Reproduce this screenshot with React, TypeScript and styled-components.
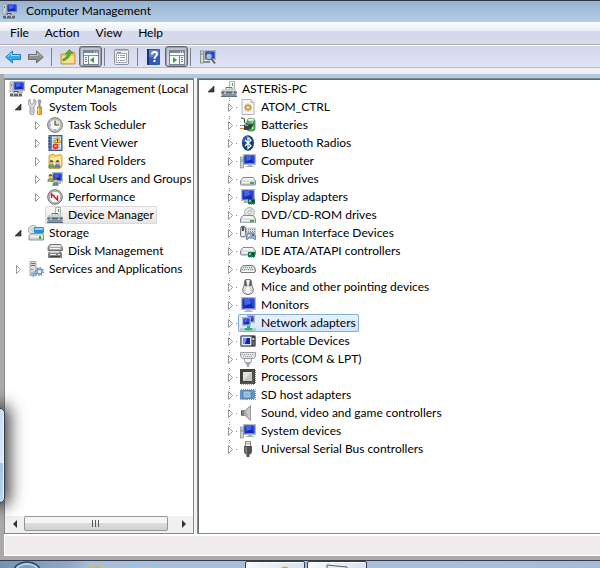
import React, { useState } from "react";
import styled, { createGlobalStyle, css } from "styled-components";

const GlobalStyle = createGlobalStyle`
  * { box-sizing: border-box; }
  body {
    margin: 0;
    background: #a9a9a9;
    color: #000;
    font-family: Lato, "Open Sans", sans-serif;
    font-size: 12px;
    line-height: 18px;
  }
  button { font: inherit; color: inherit; border: 0; padding: 0; background: none; }
  ul { list-style: none; margin: 0; padding: 0; }
`;

/* ---------- icons ---------- */

const Svg = styled.svg`
  display: block;
  flex: none;
  width: 16px;
  height: 16px;
`;

const Icon = ({ children }: { children: React.ReactNode }) => (
  <Svg viewBox="0 0 16 16" aria-hidden="true">
    {children}
  </Svg>
);

const Screen = ({ x, y, w, h }: { x: number; y: number; w: number; h: number }) => (
  <g>
    <rect x={x + 0.3} y={y + 0.3} width={w - 0.6} height={h - 0.6} fill="#dadde0" stroke="#9a9fa6" strokeWidth=".6" />
    <g transform={`translate(${x + 1.5} ${y + 1.5}) scale(${(w - 3) / 10} ${(h - 3) / 10})`}>
      <path d="M0 0h10v10H0z" fill="#1226c4" />
      <path d="M0 0h5L2 10H0z" fill="#1c35b4" />
      <path d="M1 0h5l1 5-5 2z" fill="#4468dc" />
      <path d="M6 0h4v10H9z" fill="#2446e4" />
    </g>
  </g>
);

const Green = ({ x, y }: { x: number; y: number }) => (
  <g shapeRendering="crispEdges">
    <rect x={x} y={y} width="7" height="5" fill="#11744a" />
    <rect x={x + 1} y={y + 1} width="2" height="2" fill="#6fd06f" />
    <rect x={x + 4} y={y + 1} width="2" height="2" fill="#0a3a2a" />
    <path d={`M${x + 1} ${y + 5}h1v1h-1zM${x + 3} ${y + 5}h1v1h-1zM${x + 5} ${y + 5}h1v1h-1z`} fill="#c7a73c" />
  </g>
);

const DriveBody = ({ y }: { y: number }) => (
  <g>
    <path d={`M3 ${y + 0.5}h10l2.500 3.500v3q0 1-1 1h-13q-1 0-1-1v-3z`} fill="#d4d6d8" stroke="#85898c" />
    <path d={`M3.500 ${y + 1}h9l2 2.500h-13z`} fill="#f3f4f4" />
    <rect x="2" y={y + 5} width="12" height="1" fill="#f6f6f6" />
    <rect x="10" y={y + 5} width="4" height="2" fill="#36b336" />
  </g>
);

const ComputerMgmt = () => (
  <Icon>
    <Screen x={4} y={0} w={12} h={10} />
    <rect x="8" y="10" width="6" height="2" fill="#b6b9bd" />
    <rect x="1" y="1" width="3" height="10" fill="#d5d7d4" stroke="#8c9096" strokeWidth=".6" />
    <rect x="2" y="3" width="1" height="2" fill="#46a84a" />
    <path d="M1 12h12v3.500H1z" fill="#59636d" />
    <path d="M5 12v-1.500h4V12" fill="none" stroke="#49525b" />
    <path d="M1 12h12v1H1z" fill="#a6b0b9" />
    <path d="M4.500 12.500v2M9.500 12.500v2" stroke="#e6e9eb" />
  </Icon>
);

const Tools = () => (
  <Icon>
    <path d="M2 0v4l2 1.500L6 4V0q2 1 2 3.500T6 7v7q0 1.800-2 1.800T2 14V7Q0 5.800 0 3.500T2 0z" fill="#e3e6e8" stroke="#777e86" strokeWidth=".8" />
    <path d="M4 8v6" stroke="#a4a9af" />
    <path d="M10.500 1h2l.5 2-.8 1V8h-1.400V4L10 3z" fill="#9da3a8" stroke="#666c72" strokeWidth=".5" />
    <path d="M9.500 8h4v2l-.8 1 .8 1v3q0 .8-2 .8t-2-.8v-3l.8-1-.8-1z" fill="#f0a516" stroke="#a86a08" strokeWidth=".7" />
    <path d="M10.700 8.500v6.500" stroke="#ffe089" />
  </Icon>
);

const Clock = () => (
  <Icon>
    <circle cx="8" cy="8" r="7.400" fill="#c6c8cb" stroke="#686d73" strokeWidth=".9" />
    <circle cx="8" cy="8" r="5.600" fill="#f4f6f8" stroke="#8b9197" strokeWidth=".6" />
    <path d="M8 8V2.600A5.400 5.400 0 0 1 13.400 8z" fill="#f6dfa7" />
    <path d="M8 3.500V8h4" fill="none" stroke="#3f4348" strokeWidth="1.100" />
    <path d="M3 8h1M8 12v1" stroke="#707780" />
  </Icon>
);

const EventLog = () => (
  <Icon>
    <rect x="2" y="0.500" width="13" height="15" fill="#5f85bd" stroke="#3d5c8e" />
    <rect x="5" y="1.500" width="9" height="13" fill="#d9e5f4" />
    <path d="M6 3.500h7M6 5.500h7M6 7.500h7M6 9.500h7M6 12.500h7" stroke="#93aed3" />
    <path d="M1 3h3M1 6h3M1 9h3M1 12h3" stroke="#30486e" />
    <path d="M10.500 2l3.500 5.500H7z" fill="#ffca1c" stroke="#b5860a" strokeWidth=".6" />
    <path d="M10.500 4v2M10.500 6.500v.8" stroke="#3a2a00" />
    <circle cx="8.500" cy="11.300" r="2.900" fill="#d8301c" />
    <path d="M7.400 10.200l2.200 2.200M9.600 10.200l-2.200 2.200" stroke="#fff" strokeWidth=".9" />
  </Icon>
);

const Person = ({ x, y, c }: { x: number; y: number; c: string }) => (
  <g>
    <path d={`M${x - 2.8} ${y + 5}q0-3.500 2.800-3.500t2.800 3.500z`} fill={c} stroke="#3d5b50" strokeWidth=".4" />
    <circle cx={x} cy={y} r="2" fill="#e8bd83" />
    <path d={`M${x - 2} ${y}q0-2.500 2-2.500t2 2.500q-2-1.500-4 0z`} fill="#6b4a1c" />
  </g>
);

const SharedFolder = () => (
  <Icon>
    <path d="M2 2.500L7 1l1 1.500 6-1 1 1v11l-2 2H2z" fill="#f7d568" stroke="#c1922c" strokeWidth=".8" />
    <path d="M3 5l11-1.500V13L3 15z" fill="#fceaa2" />
    <Person x={4.5} y={9.5} c="#5aa66c" />
    <Person x={10.5} y={9.5} c="#4f80c2" />
  </Icon>
);

const Users = () => (
  <Icon>
    <Screen x={5} y={1} w={11} h={10} />
    <rect x="9" y="11" width="5" height="2" fill="#b3b7bb" />
    <Person x={3.5} y={5.5} c="#86b552" />
    <Person x={8.5} y={9.5} c="#4d91be" />
  </Icon>
);

const Perf = () => (
  <Icon>
    <circle cx="8" cy="8" r="7.300" fill="#c2c4c6" stroke="#6b6e72" />
    <circle cx="8" cy="8" r="5.700" fill="#fff" stroke="#888" strokeWidth=".6" />
    <path d="M4.500 9V5l6 6V6.500" fill="none" stroke="#cf1616" strokeWidth="1.400" />
    <path d="M4.500 5L8 6.500" stroke="#e25a5a" />
  </Icon>
);

const DeviceMgr = () => (
  <Icon>
    <path d="M8.500 0.500h5v8h-5z" fill="#f2f4f3" stroke="#9ba2a2" strokeWidth=".8" />
    <rect x="11" y="2" width="1" height="3" fill="#3fae54" />
    <path d="M5 8V6.500h6V8" fill="none" stroke="#667581" />
    <path d="M2.500 8h11l2 2v5.500H.5V10z" fill="#8495a4" />
    <path d="M2.500 8h11l1.500 2H1z" fill="#c9d2d9" />
    <path d="M0 11.500h16" stroke="#56697a" />
    <path d="M4 10.500v2.500M12 10.500v2.500" stroke="#eef2f4" />
    <path d="M0 15.500h16" stroke="#5c6e7d" />
  </Icon>
);

const Storage = () => (
  <Icon>
    <circle cx="5" cy="5" r="4.600" fill="#dfe3e8" stroke="#92979d" strokeWidth=".8" />
    <circle cx="5" cy="5" r="1.300" fill="#fff" stroke="#9aa0a8" strokeWidth=".6" />
    <rect x="6" y="2" width="10" height="6" rx="1" fill="#2792d2" />
    <path d="M7 3h8v2H7z" fill="#8ed3f3" />
    <path d="M3 8.500h12l.5 2V15H1v-4.500z" fill="#d5d6d7" stroke="#797c80" strokeWidth=".8" />
    <path d="M2 11.500h13" stroke="#fff" />
    <rect x="11" y="11" width="2" height="3" fill="#39ad35" />
  </Icon>
);

const DiskMgmt = () => (
  <Icon>
    <path d="M3 1.500h10.500l2 3v3H1v-3z" fill="#a3a6a9" stroke="#56595c" strokeWidth=".8" />
    <path d="M3.500 2h10l1 2h-12z" fill="#e4e5e6" />
    <path d="M2 8.500h12l1 2V15H1v-4.500z" fill="#7d8083" />
    <path d="M3 5.500h10M3 11.500h6" stroke="#f5f5f5" />
    <rect x="3" y="8" width="9" height="2" fill="#d5d6d7" />
    <path d="M3 13.500h10" stroke="#3d4043" />
    <rect x="11" y="11" width="2" height="1" fill="#e2e3e3" />
  </Icon>
);

const Gear = ({ cx, cy, r, color }: { cx: number; cy: number; r: number; color: string }) => (
  <g>
    <circle cx={cx} cy={cy} r={r} fill="none" stroke={color} strokeWidth="2" strokeDasharray="1.500 1.200" />
    <circle cx={cx} cy={cy} r={r - 1} fill="#e6edf5" stroke={color} strokeWidth="1.300" />
  </g>
);

const Services = () => (
  <Icon>
    <path d="M2 .5h6v14H2z" fill="#d9dde0" stroke="#8f969c" strokeWidth=".8" />
    <path d="M3 2.500h4M3 4.500h4" stroke="#66707a" />
    <rect x="3" y="8" width="2" height="1" fill="#48ad4c" />
    <Gear cx={6} cy={13} r={2} color="#8fa9c4" />
    <Gear cx={11.5} cy={10.5} r={3.5} color="#6d94bf" />
  </Icon>
);

const FileGear = () => (
  <Icon>
    <path d="M2 .5h9l3 3v12H2z" fill="#fafafa" stroke="#9b9ea1" strokeWidth=".8" />
    <path d="M11 .5v3h3" fill="#dfe1e3" stroke="#9b9ea1" strokeWidth=".7" />
    <path d="M8 4.500v8M4 8.500h8M5.200 5.700l5.600 5.600M10.800 5.700l-5.600 5.600" stroke="#d3993d" strokeWidth="1.300" />
    <circle cx="8" cy="8.500" r="2.500" fill="#e3b366" stroke="#c48623" strokeWidth=".8" />
    <circle cx="8" cy="8.500" r="1" fill="#fff" />
  </Icon>
);

const Battery = () => (
  <Icon>
    <rect x="7" y="1.500" width="8" height="12.500" rx="2.500" fill="#3db954" stroke="#3a7446" strokeWidth=".7" />
    <ellipse cx="11" cy="2.800" rx="3.500" ry="1.600" fill="#e6f4e6" stroke="#7c957f" strokeWidth=".5" />
    <path d="M12.500 5v7" stroke="#b5f3b7" strokeWidth="1.500" />
    <path d="M1 1q4 0 3.500 2.500T7 6.500" fill="none" stroke="#3c4145" strokeWidth="1.100" />
    <path d="M4 7.500h4q4 0 6-2-1 6-6 7.500H4z" fill="#3a3f41" />
    <path d="M5 8.500h3" stroke="#9ba1a2" />
    <path d="M0 8.500h4M0 11.500h4" stroke="#c38c20" strokeWidth="1.200" />
  </Icon>
);

const Bluetooth = () => (
  <Icon>
    <ellipse cx="8" cy="8" rx="6" ry="7.800" fill="#153f78" />
    <ellipse cx="7" cy="5" rx="4.500" ry="4" fill="#2c5f9e" />
    <path d="M5 5l6 5.800L8 13.500v-11l3 2.700-6 5.800" fill="none" stroke="#fff" strokeWidth="1.200" />
  </Icon>
);

const Computer = () => (
  <Icon>
    <Screen x={3} y={1} w={13} h={11} />
    <path d="M8 12h4v1h2v1H6v-1h2z" fill="#aab0b5" />
    <rect x="0.500" y="4" width="3" height="11" fill="#cfd2d1" stroke="#777c80" strokeWidth=".6" />
    <rect x="1.500" y="6" width="1" height="3" fill="#3cad40" />
  </Icon>
);

const Disk = () => (
  <Icon>
    <DriveBody y={6} />
  </Icon>
);

const Display = () => (
  <Icon>
    <Screen x={1} y={0} w={14} h={12} />
    <path d="M4 12h5v1h1v1H3v-1h1z" fill="#a9afb4" />
    <Green x={8} y={10} />
  </Icon>
);

const Dvd = () => (
  <Icon>
    <circle cx="9.500" cy="5.500" r="5" fill="#e2e4e6" stroke="#999da1" strokeWidth=".8" />
    <path d="M9.500 5.500l1-5 3.500 3z" fill="#bce0bd" />
    <circle cx="9.500" cy="5.500" r="1.500" fill="#fff" stroke="#929599" strokeWidth=".7" />
    <DriveBody y={8} />
  </Icon>
);

const Hid = () => (
  <Icon>
    <rect x="5" y="3" width="11" height="5" fill="#dfe1e4" stroke="#a0a4aa" strokeWidth=".6" />
    <path d="M6 4.500h9M6 6.500h9" stroke="#888e96" strokeDasharray="1 1" />
    <path d="M1 2q2-2 4 0l1 8q-.5 2-3 2t-2.500-2z" fill="#f1f1f1" stroke="#4b4f53" strokeWidth=".9" />
    <path d="M2 1.500h2V6H2z" fill="#4b5055" />
    <path d="M8 8h6q2 2 2 6-1 2-3-1H9q-2 3-3 1 0-4 2-6z" fill="#9ab1ca" stroke="#5c7189" strokeWidth=".8" />
    <circle cx="13" cy="10" r="1" fill="#2d599d" />
    <path d="M8 10.500h2M9 9.500v2" stroke="#fff" strokeWidth=".8" />
  </Icon>
);

const Ide = () => (
  <Icon>
    <DriveBody y={4} />
    <Green x={8} y={9} />
  </Icon>
);

const Keyboard = () => (
  <Icon>
    <path d="M3 4.500h10q2.500 2 2.500 5.500 0 1.500-1.500 1.500H2Q.5 11.500.5 10q0-3.500 2.500-5.500z" fill="#dddfe1" stroke="#65696d" strokeWidth=".9" />
    <path d="M3 6.500h10M2 8.500h12" stroke="#8a8f95" strokeDasharray="1 1" />
    <path d="M2 10.500h12" stroke="#fff" />
  </Icon>
);

const Mouse = () => (
  <Icon>
    <path d="M5 1q3-2 6 0l1 6q2 3 1 6-1 2.500-5 2.500T3 13q-1-3 1-6z" fill="#ececec" stroke="#5b5f64" strokeWidth=".9" />
    <path d="M5 1.500l1-1 1 6.500H4.500zM11 1.500l-1-1L9 7h2.500z" fill="#55595e" />
    <path d="M5 13q0-6 3-6t3 6" fill="#fff" stroke="#9b9fa3" strokeWidth=".8" />
  </Icon>
);

const Monitor = () => (
  <Icon>
    <Screen x={1} y={0} w={15} h={13} />
    <path d="M6 13h5v1h2v1H4v-1h2z" fill="#b1b5ba" />
  </Icon>
);

const Network = () => (
  <Icon>
    <Screen x={7} y={0} w={8} h={8} />
    <Screen x={2} y={2} w={9} h={9} />
    <path d="M7 11h3v2h2.500v2.500h-8V13H7z" fill="#27b573" />
    <path d="M0 14.500h4.500M12.500 14.500H16" stroke="#b5bbc0" strokeWidth="2" />
  </Icon>
);

const Portable = () => (
  <Icon>
    <rect x="0.500" y="2.500" width="15" height="11" rx="1.500" fill="#32373e" stroke="#777c83" />
    <rect x="1.500" y="3.500" width="10" height="9" fill="#dfe5ee" />
    <rect x="3" y="5" width="7" height="6" fill="#0b20be" />
    <path d="M3 5h4l-2 6H3z" fill="#6f97ea" />
    <circle cx="13.300" cy="6" r="1.200" fill="#c7cbd0" />
    <path d="M12.500 9h2M12.500 11h2" stroke="#a1a6ac" />
  </Icon>
);

const Port = () => (
  <Icon>
    <path d="M0.500 1.500h15v4l-2 2h-11l-2-2z" fill="#dfe1e3" stroke="#85898e" strokeWidth=".8" />
    <path d="M2 3.500h12M3 5.500h10" stroke="#a1a5a9" strokeDasharray="1 1" />
    <path d="M4 7.500h8l-1 4H5z" fill="#f1f2f2" stroke="#8a8f94" strokeWidth=".8" />
    <path d="M6 11.500h4V14H9v2H7v-2H6z" fill="#a1a5aa" />
  </Icon>
);

const Cpu = () => (
  <Icon>
    <path d="M1 15.500h14" stroke="#c49a37" strokeDasharray="1 1" />
    <path d="M15.500 1v14" stroke="#c49a37" strokeDasharray="1 1" />
    <rect x="0" y="0" width="15" height="15" fill="#42413f" />
    <path d="M13 1v13H1" fill="none" stroke="#69665d" />
    <rect x="3" y="3" width="9" height="9" fill="#c6c7c7" />
    <path d="M3 3h9l-9 9z" fill="#e1e1e1" />
  </Icon>
);

const SdHost = () => (
  <Icon>
    <path d="M1 2.500h14M1 12.500h14" stroke="#7796b8" strokeDasharray="1 1" />
    <rect x="0" y="3" width="15" height="9" fill="#6793c4" />
    <rect x="3" y="4" width="8" height="7" fill="#a9c5e4" stroke="#43709f" strokeWidth=".8" />
    <path d="M5 6h4v3H5z" fill="#8fb3da" />
    <path d="M15.500 2v11" stroke="#8da2b8" strokeDasharray="1 1" />
    <path d="M0 12.500h7" stroke="#cbb878" />
  </Icon>
);

const Sound = () => (
  <Icon>
    <path d="M2 5.500h3L10.500.5v15L5 10.500H2z" fill="#a8acb0" stroke="#70767c" strokeWidth=".6" />
    <path d="M1 5.500h3v5H1z" fill="#565b60" />
    <path d="M6 6l4-4v12l-2-2z" fill="#c9cdd0" />
    <path d="M3 6v4" stroke="#a2a9b0" />
  </Icon>
);

const Usb = () => (
  <Icon>
    <rect x="5.500" y="0.500" width="5" height="5" fill="#eceded" stroke="#888c90" />
    <path d="M6.500 2h1v1h-1zM8.500 2h1v1h-1z" fill="#666" />
    <path d="M4 5h8v5q0 3-2.500 3.500V16h-3v-2.500Q4 13 4 10z" fill="#4f5256" />
    <path d="M6 6v5l1 1.500" fill="none" stroke="#a3a6aa" />
  </Icon>
);

const BackArrow = () => (
  <Icon>
    <path d="M.7 8L7.500 2v3.500h8v5h-8V14z" fill="#38a9e6" stroke="#1874b4" strokeWidth=".9" />
    <path d="M2.500 7.700l4-3.500v2.300h8" fill="none" stroke="#a5e2fb" />
  </Icon>
);

const ForwardArrow = () => (
  <Icon>
    <path d="M15.300 8L8.500 2v3.500h-8v5h8V14z" fill="#8e8e90" stroke="#626467" strokeWidth=".9" />
    <path d="M1.500 6.500h8V4.200l4 3.500" fill="none" stroke="#c6c6c8" />
  </Icon>
);

const UpFolder = () => (
  <Icon>
    <path d="M1 5h5l1-2h7l1 2v10H1z" fill="#efc55a" stroke="#bd8e29" strokeWidth=".8" />
    <path d="M2 7h12v7H2z" fill="#f9df8c" />
    <path d="M3 10q4-1 4.500-5.500L5.500 5 9.500.5 13 4.500l-2.500-.2Q9.500 10 3 12z" fill="#48b72c" stroke="#28831b" strokeWidth=".6" />
  </Icon>
);

const TreePane = ({ right }: { right?: boolean }) => (
  <Icon>
    <rect x="0.500" y="1.500" width="15" height="14" fill="#f6f7f8" stroke="#7d838c" />
    <path d="M1 3h14" stroke="#7e8795" strokeWidth="2" />
    <path d="M11 3h3" stroke="#fff" strokeDasharray="1 1" />
    <path d="M1 6.500h14" stroke="#8a9099" />
    {right ? (
      <>
        <path d="M10.500 7v8" stroke="#7d838c" />
        <path d="M12 8.500h2M12 10.500h2M12 12.500h2" stroke="#747d88" />
        <path d="M4 8v6l4-3z" fill="#36a926" />
      </>
    ) : (
      <>
        <path d="M5.500 7v8" stroke="#7d838c" />
        <path d="M2 8.500h2M2 10.500h2M2 12.500h2" stroke="#747d88" />
        <path d="M11 8v6l-4-3z" fill="#36a926" />
      </>
    )}
  </Icon>
);

const Properties = () => (
  <Icon>
    <rect x="0.500" y="0.500" width="14" height="15" rx="1" fill="#eeeff0" stroke="#8c9095" />
    <path d="M1 1.500h13" stroke="#b7bbc0" />
    <rect x="2.500" y="4.500" width="10" height="9" fill="#fff" stroke="#a7abb0" />
    <path d="M4 6.500h1M4 8.500h1M4 11.500h1" stroke="#5a86ba" />
    <path d="M6 6.500h5M6 8.500h5M6 11.500h5" stroke="#9ba0a6" />
    <path d="M3 3.500h4" stroke="#8c9095" />
  </Icon>
);

const HelpIcon = () => (
  <Icon>
    <rect x="1" y="0" width="13" height="16" rx="1" fill="#3258ba" />
    <path d="M2 0v16" stroke="#1b3279" strokeWidth="2" />
    <path d="M3 1h10v5q-4 3-10 2z" fill="#5b80d5" />
    <path d="M6 5.500Q6 3 8.500 3T11 5.200q0 1.300-1.300 2.200T8.500 10" fill="none" stroke="#fff" strokeWidth="1.800" />
    <rect x="7.500" y="11" width="2" height="2" fill="#fff" />
  </Icon>
);

const Scan = () => (
  <Icon>
    <Screen x={4} y={1} w={12} h={10} />
    <rect x="0.500" y="2" width="3" height="12" fill="#d6d8da" stroke="#73777c" strokeWidth=".7" />
    <rect x="1.500" y="4" width="1" height="2" fill="#33a33c" />
    <path d="M4 12h6v2H4z" fill="#888d92" />
    <circle cx="9" cy="7.500" r="3.300" fill="#b4d2f3" fillOpacity=".85" stroke="#48535f" />
    <path d="M11.500 10l3.500 4.500" stroke="#6b6253" strokeWidth="2" />
  </Icon>
);

/* ---------- window chrome ---------- */

const Screenful = styled.div`
  position: relative;
  display: flex;
  flex-direction: column;
  min-height: 100vh;
  overflow: hidden;
`;

const TitleBar = styled.header`
  display: flex;
  align-items: center;
  gap: 8px;
  height: 22px;
  padding: 0 2px 2px;
  border-top: 1px solid #32333b;
  background: linear-gradient(#98b1d0, #b5cfe8);

  h1 { margin: 0; font-size: 12px; font-weight: 400; }
`;

const MenuBar = styled.nav`
  display: flex;
  gap: 16px;
  height: 24px;
  padding: 0 10px;
  border-bottom: 1px solid #fff;
  box-shadow: inset 0 -1px #b1b1ad;
  background: linear-gradient(#fff, #e7ecf6 9px, #d4d9ec 9px);

  button { height: 22px; }
`;

const ToolBar = styled.div`
  display: flex;
  align-items: center;
  height: 22px;
  padding-left: 1px;
  border-bottom: 1px solid #b3b8c6;
  background: linear-gradient(#d2d7eb, #dee4f6);
`;

const ToolButton = styled.button<{ $pressed?: boolean }>`
  display: grid;
  place-items: center;
  width: 23px;
  height: 21px;
  ${(p) =>
    p.$pressed &&
    css`
      border: 1px solid #5f6571;
      border-radius: 3px;
      background: linear-gradient(#b9bfcb, #dce0ea);
      box-shadow: inset 0 0 0 1px #979da9;
    `}
`;

const Separator = styled.span<{ $wide?: boolean }>`
  width: 1px;
  height: 18px;
  margin: ${(p) => (p.$wide ? "0 4px" : "0 5px 0 2px")};
  background: #7d828f;
`;

const Rebar = styled.div`
  height: 10px;
  background: linear-gradient(#f0f0f0 6px, transparent 6px), linear-gradient(90deg, #a9a9a9 4px, #b0cae4 4px);
`;

const Panes = styled.main`
  flex: 1;
  display: grid;
  grid-template-columns: minmax(120px, 190px) 1fr;
  gap: 3px;
  padding-left: 4px;
  background: linear-gradient(90deg, #a9a9a9 4px, #eef1f5 4px);
`;

const Pane = styled.section<{ $right?: boolean }>`
  display: flex;
  flex-direction: column;
  min-width: 0;
  background: #fff;
  border: 1px solid #858990;
  border-right: ${(p) => (p.$right ? "0" : "1px solid #858990")};
  box-shadow: ${(p) => (p.$right ? "inset 1px 1px #696969" : "inset 0 1px #77797c")};
  padding-top: 1px;
  overflow: hidden;
`;

const Tree = styled.ul`
  flex: 1;
  overflow: hidden;
`;

const Row = styled.div<{ $indent: number }>`
  display: flex;
  align-items: center;
  height: 18px;
  padding-left: ${(p) => p.$indent}px;
  white-space: nowrap;
`;

const Twisty = styled.button<{ $dotted?: boolean }>`
  display: flex;
  align-items: center;
  flex: none;
  width: 11px;
  height: 18px;
  background: ${(p) =>
    p.$dotted
      ? "repeating-linear-gradient(90deg, #8c8c8c 0 1px, transparent 1px 2px) 9px 9px / 2px 1px no-repeat, repeating-linear-gradient(#8c8c8c 0 1px, transparent 1px 2px) 2px 0 / 1px 3px no-repeat"
      : "none"};
`;

const Label = styled.span<{ $state?: "muted" | "hot" }>`
  display: flex;
  align-items: center;
  gap: 5px;
  height: 18px;
  padding: 0 3px 0 2px;
  border-radius: 2px;
  ${(p) => p.$state === "muted" && "background: linear-gradient(#f8f8f8, #e5e5e5); box-shadow: inset 0 0 0 1px #d9d9d9;"}
  ${(p) => p.$state === "hot" && "background: linear-gradient(#ebf4fe, #cfe4fe); box-shadow: inset 0 0 0 1px #84acdd;"}
`;

const Arrow = ({ open }: { open: boolean }) => (
  <svg width="8" height="10" viewBox="0 0 8 10" aria-hidden="true">
    {open ? (
      <path d="M6 2v6H0z" fill="#404040" stroke="#1e1e1e" strokeWidth=".6" />
    ) : (
      <path d="M1.500 1.500v8l4-4z" fill="#fff" stroke="#989898" />
    )}
  </svg>
);

type Item = {
  label: string;
  icon: React.ComponentType;
  indent: number;
  branch?: "open" | "closed";
  dotted?: boolean;
  state?: "muted" | "hot";
};

const TreeView = ({ name, items }: { name: string; items: Item[] }) => (
  <Tree role="tree" aria-label={name}>
    {items.map(({ label, icon: Glyph, indent, branch, dotted, state }) => (
      <li key={label} role="treeitem" aria-selected={!!state} aria-expanded={branch ? branch === "open" : undefined}>
        <Row $indent={indent}>
          {branch && (
            <Twisty aria-label={`Toggle ${label}`} $dotted={dotted}>
              <Arrow open={branch === "open"} />
            </Twisty>
          )}
          <Label $state={state}>
            <Glyph />
            {label}
          </Label>
        </Row>
      </li>
    ))}
  </Tree>
);

const consoleItems: Item[] = [
  { label: "Computer Management (Local", icon: ComputerMgmt, indent: 2 },
  { label: "System Tools", icon: Tools, indent: 10, branch: "open" },
  { label: "Task Scheduler", icon: Clock, indent: 29, branch: "closed" },
  { label: "Event Viewer", icon: EventLog, indent: 29, branch: "closed" },
  { label: "Shared Folders", icon: SharedFolder, indent: 29, branch: "closed" },
  { label: "Local Users and Groups", icon: Users, indent: 29, branch: "closed" },
  { label: "Performance", icon: Perf, indent: 29, branch: "closed" },
  { label: "Device Manager", icon: DeviceMgr, indent: 40, state: "muted" },
  { label: "Storage", icon: Storage, indent: 10, branch: "open" },
  { label: "Disk Management", icon: DiskMgmt, indent: 40 },
  { label: "Services and Applications", icon: Services, indent: 10, branch: "closed" },
];

const devices: [string, React.ComponentType][] = [
  ["ATOM_CTRL", FileGear],
  ["Batteries", Battery],
  ["Bluetooth Radios", Bluetooth],
  ["Computer", Computer],
  ["Disk drives", Disk],
  ["Display adapters", Display],
  ["DVD/CD-ROM drives", Dvd],
  ["Human Interface Devices", Hid],
  ["IDE ATA/ATAPI controllers", Ide],
  ["Keyboards", Keyboard],
  ["Mice and other pointing devices", Mouse],
  ["Monitors", Monitor],
  ["Network adapters", Network],
  ["Portable Devices", Portable],
  ["Ports (COM & LPT)", Port],
  ["Processors", Cpu],
  ["SD host adapters", SdHost],
  ["Sound, video and game controllers", Sound],
  ["System devices", Computer],
  ["Universal Serial Bus controllers", Usb],
];

const deviceItems: Item[] = [
  { label: "ASTERiS-PC", icon: DeviceMgr, indent: 10, branch: "open" },
  ...devices.map(([label, icon]): Item => ({
    label,
    icon,
    indent: 29,
    branch: "closed",
    dotted: true,
    state: label === "Network adapters" ? "hot" : undefined,
  })),
];

const ScrollBar = styled.div`
  display: flex;
  height: 17px;
  background: #f0f0f0;
`;

const ScrollButton = styled.button`
  display: grid;
  place-items: center;
  width: 19px;
  height: 15px;
`;

const ScrollTrack = styled.div`
  flex: 1;
  display: flex;
`;

const ScrollThumb = styled.div`
  display: grid;
  place-items: center;
  width: 96%;
  height: 15px;
  border: 1px solid #959595;
  border-radius: 2px;
  background: linear-gradient(#f5f5f5 50%, #dadbdd 50%, #d0d1d3);
`;

const StatusBar = styled.footer`
  height: 22px;
  margin-left: 4px;
  border: solid #fff;
  border-width: 2px 0 1px 1px;
  background: #f0ecec;
`;

const WindowEdge = styled.div`
  height: 4px;
  background: #a9a9a9;
`;

const TaskBar = styled.div`
  display: flex;
  gap: 2px;
  height: 8px;
  overflow: hidden;
  border-top: 1px solid #333c4b;
  background: linear-gradient(90deg, #7590b4, #8fa8c8 70px, #a7bfdd 90px, #a5bddb);
`;

const TaskIcons = styled.div`
  width: 243px;
  height: 7px;

  svg { display: block; }
`;

const TaskButton = styled.button`
  width: 60px;
  height: 12px;
  border: 1px solid #303d52;
  border-radius: 2px;
  background: linear-gradient(90deg, #f7f9fc, #d6e2f0);
  box-shadow: inset 0 1px #fff;

  svg { display: block; margin: 0 auto; }
`;

const Peek = styled.div`
  position: absolute;
  left: -10px;
  top: 408px;
  width: 15px;
  height: 95px;
  border: 1px solid #2b3a4c;
  border-radius: 5px;
  background: linear-gradient(#cadcef, #dce7f5 54px, #a5c4e2 54px, #b9d6ec);
  box-shadow: inset -1px 0 #eef7ff, 2px 0 16px 3px rgba(0, 0, 0, 0.75);
`;

export default function App() {
  const [treeShown, setTreeShown] = useState(true);
  const [actionsShown, setActionsShown] = useState(true);
  return (
    <>
      <GlobalStyle />
      <Screenful>
        <TitleBar>
          <ComputerMgmt />
          <h1>Computer Management</h1>
        </TitleBar>
        <MenuBar aria-label="Main menu">
          <button>File</button>
          <button>Action</button>
          <button>View</button>
          <button>Help</button>
        </MenuBar>
        <ToolBar role="toolbar" aria-label="Console tools">
          <ToolButton aria-label="Back"><BackArrow /></ToolButton>
          <ToolButton aria-label="Forward"><ForwardArrow /></ToolButton>
          <Separator $wide />
          <ToolButton aria-label="Up one level"><UpFolder /></ToolButton>
          <ToolButton aria-label="Console tree" $pressed={treeShown} onClick={() => setTreeShown(!treeShown)}>
            <TreePane />
          </ToolButton>
          <Separator />
          <ToolButton aria-label="Properties"><Properties /></ToolButton>
          <Separator $wide />
          <ToolButton aria-label="Help"><HelpIcon /></ToolButton>
          <ToolButton aria-label="Action pane" $pressed={actionsShown} onClick={() => setActionsShown(!actionsShown)}>
            <TreePane right />
          </ToolButton>
          <Separator />
          <ToolButton aria-label="Scan for hardware changes"><Scan /></ToolButton>
        </ToolBar>
        <Rebar />
        <Panes>
          <Pane>
            <TreeView name="Console tree" items={consoleItems} />
            <ScrollBar>
              <ScrollButton aria-label="Scroll left">
                <svg width="4" height="8" viewBox="0 0 4 8"><path d="M4 0v8L0 4z" fill="#333" /></svg>
              </ScrollButton>
              <ScrollTrack>
                <ScrollThumb>
                  <svg width="8" height="7" viewBox="0 0 8 7"><path d="M.5 0v7M3.500 0v7M6.500 0v7" stroke="#55585c" /></svg>
                </ScrollThumb>
              </ScrollTrack>
              <ScrollButton aria-label="Scroll right">
                <svg width="4" height="8" viewBox="0 0 4 8"><path d="M0 0v8l4-4z" fill="#333" /></svg>
              </ScrollButton>
            </ScrollBar>
          </Pane>
          <Pane $right>
            <TreeView name="Devices" items={deviceItems} />
          </Pane>
        </Panes>
        <StatusBar />
        <WindowEdge />
        <TaskBar>
          <TaskIcons>
            <svg width="160" height="7" viewBox="0 0 160 7" aria-hidden="true">
              <ellipse cx="27" cy="10" rx="13" ry="9" fill="#b7cee4" stroke="#21436f" strokeWidth="1.500" />
              <ellipse cx="27" cy="8" rx="9" ry="4" fill="#7d9dbc" />
              <path d="M88 8q8-6 16-2" fill="none" stroke="#e6bd3a" strokeWidth="1.500" />
              <path d="M91 9q5-5 11 0z" fill="#5f9bd8" />
              <path d="M137 6h15v2h-15z" fill="#dcc07a" />
            </svg>
          </TaskIcons>
          <TaskButton aria-label="Paint">
            <svg width="32" height="8" viewBox="0 0 32 8"><ellipse cx="26" cy="6" rx="4" ry="2.500" fill="#d4a85d" /></svg>
          </TaskButton>
          <TaskButton aria-label="Computer Management">
            <svg width="24" height="8" viewBox="0 0 24 8"><path d="M2 2l20 2v4H2z" fill="#e9ecef" stroke="#555c66" /><path d="M4 5h6v3H4z" fill="#1430c4" /></svg>
          </TaskButton>
        </TaskBar>
        <Peek />
      </Screenful>
    </>
  );
}
